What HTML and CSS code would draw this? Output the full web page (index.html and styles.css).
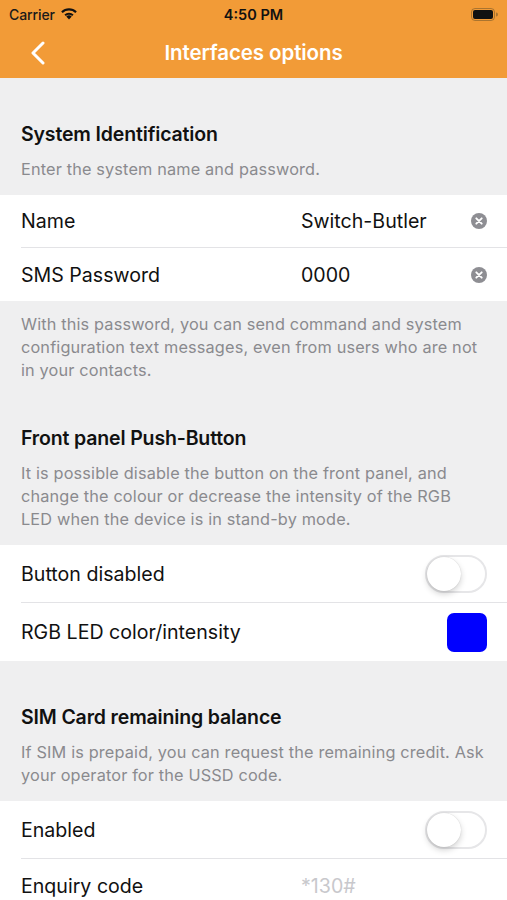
FILE: index.html
```html
<!DOCTYPE html>
<html>
<head>
<meta charset="utf-8">
<link rel="stylesheet" href="styles.css">
</head>
<body>
<div class="screen">
  <div class="topbar">
    <div class="status">
      <div class="status-left">
        <span class="carrier">Carrier</span>
        <svg class="wifi" width="18" height="13" viewBox="0 0 18 13">
          <path d="M9 12.6 L6.3 9.6 A4 4 0 0 1 11.7 9.6 Z" fill="#111"/>
          <path d="M4.4 7.6 A6.8 6.8 0 0 1 13.6 7.6 L12.2 9.1 A4.9 4.9 0 0 0 5.8 9.1 Z" fill="#111"/>
          <path d="M1.2 4.4 A11.3 11.3 0 0 1 16.8 4.4 L15.3 5.9 A9.2 9.2 0 0 0 2.7 5.9 Z" fill="#111"/>
        </svg>
      </div>
      <span class="time">4:50 PM</span>
      <div class="status-right">
        <svg width="27" height="13" viewBox="0 0 27 13">
          <rect x="0.5" y="0.5" width="23" height="12" rx="3.5" fill="none" stroke="#7a5a2a" stroke-opacity="0.6"/>
          <rect x="2" y="2" width="20" height="9" rx="2" fill="#111"/>
          <path d="M25 4.5 a2 2 0 0 1 0 4 Z" fill="#7a5a2a" fill-opacity="0.6"/>
        </svg>
      </div>
    </div>
    <div class="nav">
      <svg class="back" width="16" height="24" viewBox="0 0 16 24">
        <path d="M13 2 L3 12 L13 22" fill="none" stroke="#fff" stroke-width="3" stroke-linecap="round" stroke-linejoin="round"/>
      </svg>
      <span class="nav-title">Interfaces options</span>
    </div>
  </div>

  <div class="content">
    <div class="section-title">System Identification</div>
    <div class="section-desc">Enter the system name and password.</div>
    <div class="group">
      <div class="row row-field">
        <span class="label">Name</span>
        <span class="value">Switch-Butler</span>
        <span class="clear"><svg width="16" height="16" viewBox="0 0 16 16"><circle cx="8" cy="8" r="8" fill="#8e8e93"/><path d="M5.3 5.3 L10.7 10.7 M10.7 5.3 L5.3 10.7" stroke="#fff" stroke-width="1.9" stroke-linecap="round"/></svg></span>
      </div>
      <div class="row row-field">
        <span class="label">SMS Password</span>
        <span class="value">0000</span>
        <span class="clear"><svg width="16" height="16" viewBox="0 0 16 16"><circle cx="8" cy="8" r="8" fill="#8e8e93"/><path d="M5.3 5.3 L10.7 10.7 M10.7 5.3 L5.3 10.7" stroke="#fff" stroke-width="1.9" stroke-linecap="round"/></svg></span>
      </div>
    </div>
    <div class="section-footer">With this password, you can send command and system configuration text messages, even from users who are not in your contacts.</div>

    <div class="section-title">Front panel Push-Button</div>
    <div class="section-desc">It is possible disable the button on the front panel, and change the colour or decrease the intensity of the RGB LED when the device is in stand-by mode.</div>
    <div class="group">
      <div class="row row-tall">
        <span class="label">Button disabled</span>
        <span class="switch"><span class="knob"></span></span>
      </div>
      <div class="row row-tall">
        <span class="label">RGB LED color/intensity</span>
        <span class="swatch"></span>
      </div>
    </div>

    <div class="section-title">SIM Card remaining balance</div>
    <div class="section-desc">If SIM is prepaid, you can request the remaining credit. Ask your operator for the USSD code.</div>
    <div class="group">
      <div class="row row-tall">
        <span class="label">Enabled</span>
        <span class="switch"><span class="knob"></span></span>
      </div>
      <div class="row row-last">
        <span class="label">Enquiry code</span>
        <span class="value placeholder">*130#</span>
      </div>
    </div>
  </div>
</div>
</body>
</html>
```

FILE: styles.css
```css
* { box-sizing: border-box; }
html, body {
  margin: 0;
  padding: 0;
}
body {
  font-family: Inter, "Noto Sans", sans-serif;
  background: #efeff0;
  color: #111;
}
.screen {
  width: 507px;
  height: 900px;
  overflow: hidden;
  background: #efeff0;
}
.topbar {
  background: #f29b37;
}
.status {
  height: 28px;
  display: flex;
  align-items: center;
  justify-content: space-between;
  padding: 0 9px 0 9px;
  position: relative;
}
.status-left {
  display: flex;
  align-items: center;
  gap: 5px;
  width: 120px;
}
.carrier {
  font-size: 14px;
  font-weight: 500;
  color: #1a1a1a;
  letter-spacing: -0.1px;
}
.wifi { margin-top: -1px; }
.time {
  font-size: 14.5px;
  font-weight: 600;
  color: #111;
}
.status-right {
  width: 120px;
  display: flex;
  justify-content: flex-end;
}
.nav {
  height: 50px;
  display: flex;
  align-items: center;
  justify-content: center;
  position: relative;
}
.back {
  position: absolute;
  left: 30px;
  top: 13px;
}
.nav-title {
  color: #fff;
  font-size: 20.5px;
  font-weight: 600;
  letter-spacing: -0.1px;
  margin-top: -2px;
}
.content {
  padding-bottom: 40px;
}
.section-title {
  padding: 44px 21px 0;
  font-size: 19.5px;
  line-height: 24px;
  font-weight: 600;
  color: #111;
  letter-spacing: -0.15px;
}
.section-desc {
  padding: 12px 21px 14px 21px;
  font-size: 16.3px;
  line-height: 23px;
  color: #8a8a8e;
  letter-spacing: 0.15px;
}
.section-footer {
  padding: 12px 21px 0 21px;
  font-size: 16.3px;
  line-height: 23px;
  color: #8a8a8e;
  letter-spacing: 0.15px;
}
.group {
  background: #fff;
}
.row {
  display: flex;
  align-items: center;
  margin-left: 21px;
  padding-right: 20px;
  border-bottom: 1px solid #e3e3e6;
  font-size: 19.6px;
  letter-spacing: 0;
}
.row:last-child { border-bottom: none; }
.row-field { height: 53px; }
.row-tall { height: 58px; }
.row-last { height: 54px; }
.label {
  flex: 1;
  color: #111;
}
.value {
  width: 156px;
  flex: none;
  color: #111;
}
.placeholder {
  color: #c8c8cc;
  width: 186px;
}
.clear {
  width: 30px;
  display: flex;
  justify-content: flex-end;
}
.clear svg { display: block; }
.switch {
  width: 62px;
  height: 38px;
  border-radius: 19px;
  border: 2px solid #e6e6e8;
  background: #fff;
  position: relative;
}
.knob {
  position: absolute;
  left: 0;
  top: 0;
  width: 34px;
  height: 34px;
  border-radius: 50%;
  background: #fff;
  box-shadow: 0 3px 6px rgba(0,0,0,0.18), 0 0 1px rgba(0,0,0,0.2);
}
.swatch {
  width: 40px;
  height: 39px;
  border-radius: 7px;
  background: #0000ff;
}
```
